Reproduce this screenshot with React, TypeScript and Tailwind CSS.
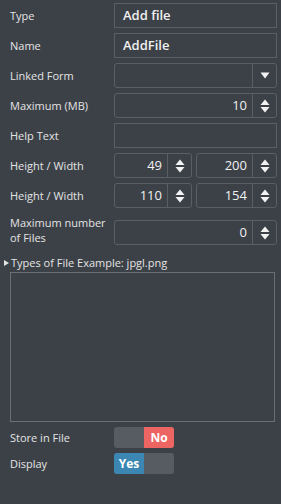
import React from "react";

const font = { fontFamily: '"Open Sans", "Noto Sans", sans-serif' };

function Spin() {
  return (
    <div className="flex w-[24px] items-center justify-center self-stretch border-l border-[#5a5f66]">
      <svg width="10" height="14" viewBox="0 0 10 14">
        <path d="M5 0.5 L9.5 6 L0.5 6 Z" fill="#f2f2f2" />
        <path d="M5 13.5 L9.5 8 L0.5 8 Z" fill="#f2f2f2" />
      </svg>
    </div>
  );
}

function NumInput({ value, className = "" }: { value: string; className?: string }) {
  return (
    <div className={`flex h-[25px] items-center rounded-[3px] border border-[#5a5f66] bg-[#3c4148] ${className}`}>
      <div className="flex-1 pr-[5px] text-right text-[13px] text-[#f0f0f0]">{value}</div>
      <Spin />
    </div>
  );
}

function TextInput({ value }: { value?: string }) {
  return (
    <div className="flex h-[25px] flex-1 items-center border border-[#5a5f66] bg-[#3c4148] pl-[8px] text-[13px] font-semibold text-[#f0f0f0]">
      {value}
    </div>
  );
}

function Label({ children }: { children: React.ReactNode }) {
  return <div className="w-[104px] shrink-0 text-[11px] leading-[15px] text-[#e4e4e4]">{children}</div>;
}

function Row({ label, children, end, className = "" }: { label: React.ReactNode; children: React.ReactNode; end?: boolean; className?: string }) {
  return (
    <div className={`flex ${end ? "items-end" : "items-center"} pl-[10px] pr-[4px] ${className}`}>
      <Label>{label}</Label>
      <div className="flex flex-1 gap-[4px]">{children}</div>
    </div>
  );
}

function Toggle({ on }: { on: boolean }) {
  return (
    <div className="flex h-[21px] w-[60px] overflow-hidden rounded-[3px] bg-[#575c63] text-[12px] font-bold text-white">
      {on ? (
        <>
          <div className="flex w-[30px] items-center justify-center bg-[#3b86b2]">Yes</div>
          <div className="flex-1" />
        </>
      ) : (
        <>
          <div className="flex-1" />
          <div className="flex w-[30px] items-center justify-center bg-[#ec6563]">No</div>
        </>
      )}
    </div>
  );
}

export default function App() {
  return (
    <div className="h-[504px] w-[281px] bg-[#3c4148] pt-[3px]" style={font}>
      <div className="flex flex-col gap-[5px]">
        <Row label="Type">
          <TextInput value="Add file" />
        </Row>
        <Row label="Name">
          <TextInput value="AddFile" />
        </Row>
        <Row label="Linked Form">
          <div className="flex h-[25px] flex-1 items-center rounded-[3px] border border-[#5a5f66] bg-[#3c4148]">
            <div className="flex-1" />
            <div className="flex w-[24px] items-center justify-center self-stretch border-l border-[#5a5f66]">
              <svg width="10" height="7" viewBox="0 0 10 7">
                <path d="M0.5 0.5 L9.5 0.5 L5 6.5 Z" fill="#f2f2f2" />
              </svg>
            </div>
          </div>
        </Row>
        <Row label="Maximum (MB)">
          <NumInput value="10" className="flex-1" />
        </Row>
        <Row label="Help Text">
          <TextInput />
        </Row>
        <Row label="Height / Width">
          <NumInput value="49" className="w-[78px]" />
          <NumInput value="200" className="flex-1" />
        </Row>
        <Row label="Height / Width">
          <NumInput value="110" className="w-[78px]" />
          <NumInput value="154" className="flex-1" />
        </Row>
        <Row label={<>Maximum number<br />of Files</>} end className="mt-[2px]">
          <NumInput value="0" className="flex-1" />
        </Row>
      </div>
      <div className="mt-[10px] flex items-center pl-[4px] text-[11px] leading-[15px] text-[#e4e4e4]">
        <svg width="5" height="6" viewBox="0 0 5 6" className="mr-[2px]">
          <path d="M0 0 L5 3 L0 6 Z" fill="#e4e4e4" />
        </svg>
        Types of File Example: jpgl.png
      </div>
      <div className="ml-[10px] mr-[6px] mt-[2px] h-[150px] border border-[#6a6e75]" />
      <div className="mt-[5px] flex flex-col gap-[5px]">
        <Row label="Store in File">
          <Toggle on={false} />
        </Row>
        <Row label="Display">
          <Toggle on />
        </Row>
      </div>
    </div>
  );
}
